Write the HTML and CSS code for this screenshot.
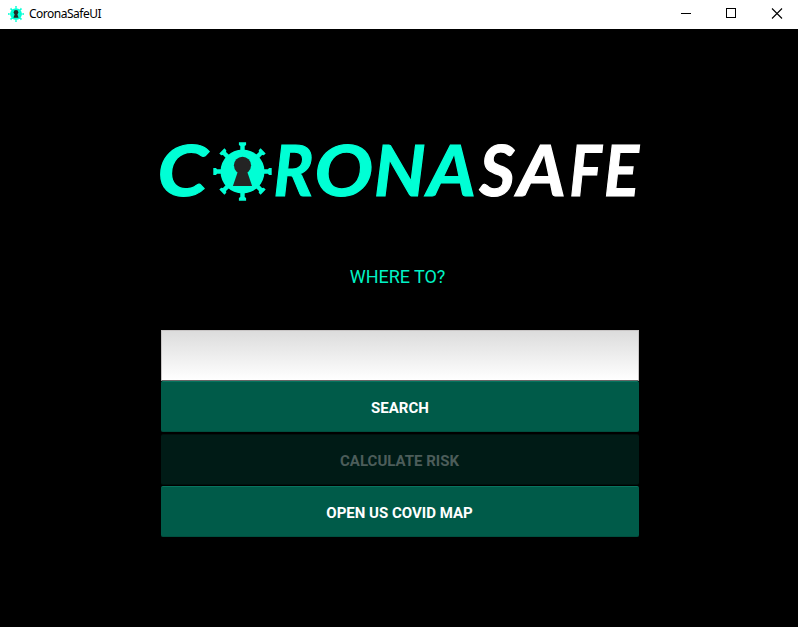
FILE: index.html
```html
<!DOCTYPE html>
<html lang="en">
<head>
<meta charset="utf-8">
<title>CoronaSafeUI</title>
<link rel="stylesheet" href="styles.css">
</head>
<body>
<svg class="defs" width="0" height="0">
  <defs>
    <g id="spike"><path d="M-2.200-20V-25.500L-3.600-26.500V-29.200H3.600V-26.500L2.200-25.500V-20Z"/></g>
    <symbol id="virus" viewBox="-30 -30 60 60">
      <g fill="#00ffd5">
        <circle r="22"/>
        <use href="#spike"/><use href="#spike" transform="rotate(45)"/>
        <use href="#spike" transform="rotate(90)"/><use href="#spike" transform="rotate(135)"/>
        <use href="#spike" transform="rotate(180)"/><use href="#spike" transform="rotate(225)"/>
        <use href="#spike" transform="rotate(270)"/><use href="#spike" transform="rotate(315)"/>
      </g>
      <g class="keyhole"><circle cy="-6.2" r="8.6"/><path d="M-4.3-1H4.3L9.6 14.4H-9.6Z"/></g>
    </symbol>
  </defs>
</svg>
<header class="titlebar">
  <svg class="app-icon" width="16" height="16"><use href="#virus"/></svg>
  <span class="title">CoronaSafeUI</span>
  <div class="controls">
    <svg width="46" height="28"><path d="M21 13.5H31"/></svg>
    <svg width="45" height="28"><rect x="20.500" y="8.500" width="9" height="9"/></svg>
    <svg width="46" height="28"><path class="close" d="M21 8.500L31 18.500M31 8.500L21 18.500"/></svg>
  </div>
</header>
<main>
  <svg class="logo" width="480" height="62" viewBox="160 141 480 62">
    <g class="corona">
      <text transform="translate(157.500 196.300) scale(1.120 .980)">C</text>
      <text transform="translate(273.500 196.300) scale(.920 .980)">R</text>
      <text transform="translate(314.500 196.300) scale(1.080 .980)">O</text>
      <text transform="translate(374 196.300) scale(1 .980)">N</text>
      <text transform="translate(427.500 196.300) scale(1.030 .980)">A</text>
    </g>
    <g class="safe">
      <text transform="translate(479.500 196.300) scale(.950 .980)">S</text>
      <text transform="translate(517.500 196.300) scale(1.030 .980)">A</text>
      <text transform="translate(569.500 196.300) scale(.840 .980)">F</text>
      <text transform="translate(604 196.300) scale(.900 .980)">E</text>
    </g>
    <use href="#virus" x="212.500" y="141.500" width="60" height="60"/>
  </svg>
  <p class="prompt">WHERE TO?</p>
  <form class="panel">
    <input class="destination" type="text" aria-label="Destination">
    <button type="button" class="search">SEARCH</button>
    <button type="button" disabled>CALCULATE RISK</button>
    <button type="button">OPEN US COVID MAP</button>
  </form>
</main>
</body>
</html>
```
FILE: styles.css
```css
* { box-sizing: border-box; }
body { margin: 0; height: 627px; overflow: hidden; background: #000; font-family: Roboto, sans-serif; }
.defs { display: none; }
.titlebar { display: flex; align-items: center; height: 29px; padding-left: 8px; background: #fff; }
.app-icon { margin-top: -2px; }
.title { margin: -1px 0 0 5px; font: 12px/16px "Noto Sans", sans-serif; letter-spacing: -.5px; color: #000; }
.controls { display: flex; height: 28px; margin: -1px 1px 0 auto; }
.controls svg { fill: none; stroke: #000; stroke-width: 1; }
.controls .close { stroke-width: 1.1; }
.keyhole { fill: #242424; }
main { display: flex; flex-direction: column; align-items: center; padding-top: 112px; }
.logo { display: block; margin-left: 2px; overflow: visible; }
.logo text { font: italic 700 72px Lato, sans-serif; stroke-width: 1.2px; }
.corona { fill: #00ffd5; stroke: #00ffd5; }
.safe { fill: #fff; stroke: #fff; }
.prompt { margin: 63px 0 0; padding-right: 3px; font-size: 18px; line-height: 22px; letter-spacing: -.05px; color: #00f2c5; }
.panel { display: flex; flex-direction: column; width: 478px; margin: 42px 0 0 2px; }
.destination { height: 51px; padding: 0 12px; border: 1px solid #c8c5c5; border-bottom: 1px solid #666; border-radius: 0; outline: 0; background: linear-gradient(#dcdcdc, #fff); }
button { height: 51px; padding: 2px 1px 0 0; border: 0; border-top: 1px solid #08745f; border-bottom: 1px solid #004f3f; border-radius: 2px; background: #005b49; color: #fff; font: 700 15px/20px Roboto, sans-serif; }
.search { padding-right: 0; }
button:disabled { margin: 2px 0 1px; border-color: #00110e; background: #001b16; color: #4c5d5a; }
```
